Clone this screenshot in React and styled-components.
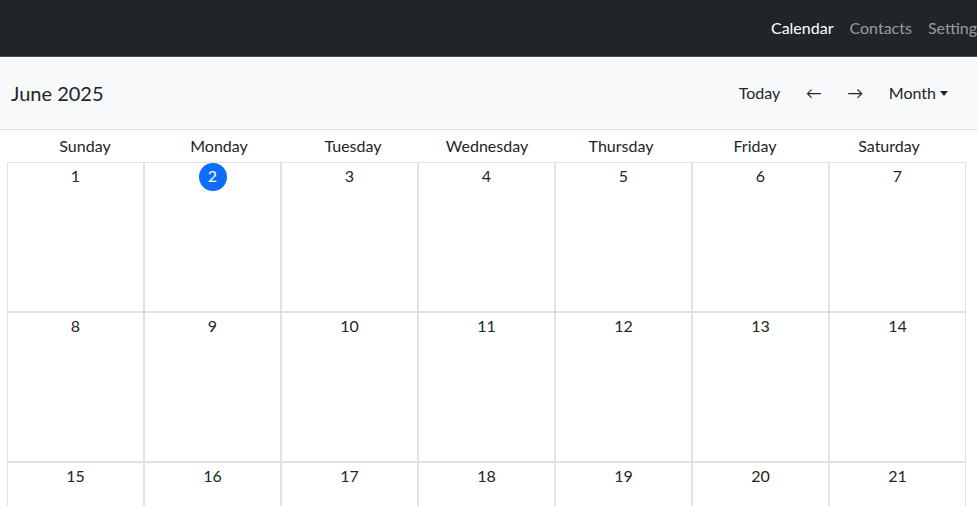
import React from "react";
import styled, { createGlobalStyle } from "styled-components";

const Global = createGlobalStyle`
  html, body { margin: 0; padding: 0; }
  body {
    font-family: "Segoe UI", Lato, "Liberation Sans", sans-serif;
    font-size: 16px;
    color: #212529;
    background: #fff;
    overflow-x: hidden;
  }
  * { box-sizing: border-box; }
`;

const Navbar = styled.nav`
  height: 57px;
  background: #212529;
  border-bottom: 1px solid #495057;
  display: flex;
  align-items: center;
  justify-content: flex-end;
`;

const NavList = styled.div`
  display: flex;
  flex-shrink: 0;
  margin-right: -15px;
`;

const NavLink = styled.a`
  padding: 8px 8px;
  color: ${(p) => (p.$active ? "#fff" : "rgba(255,255,255,0.55)")};
  text-decoration: none;
  line-height: 24px;
  white-space: nowrap;
`;

const Toolbar = styled.div`
  height: 73px;
  background: #f8f9fa;
  border-bottom: 1px solid #dee2e6;
  display: flex;
  align-items: center;
  justify-content: space-between;
  padding: 0 17px 0 11px;
`;

const Title = styled.h1`
  margin: 0;
  font-size: 20px;
  font-weight: 400;
  line-height: 28px;
`;

const Controls = styled.div`
  display: flex;
  align-items: center;
  gap: 1.5px;
`;

const Btn = styled.button`
  border: none;
  background: transparent;
  font: inherit;
  color: #212529;
  padding: 6px 12px;
  line-height: 24px;
  cursor: pointer;
  display: inline-flex;
  align-items: center;
`;

const Caret = styled.span`
  display: inline-block;
  margin-left: 4px;
  border-top: 5px solid #212529;
  border-left: 4px solid transparent;
  border-right: 4px solid transparent;
  margin-top: 1px;
`;

const Weekdays = styled.div`
  display: grid;
  grid-template-columns: repeat(7, 134px);
  padding-left: 18px;
  height: 32px;
  align-items: center;
`;

const Weekday = styled.div`
  text-align: center;
  line-height: 24px;
`;

const Grid = styled.div`
  display: grid;
  grid-template-columns: repeat(7, 137px);
  grid-auto-rows: 150px;
  margin-left: 7px;
`;

const Cell = styled.div`
  border: 1px solid #dee2e6;
  display: flex;
  flex-direction: column;
  align-items: center;
`;

const DayNum = styled.span`
  width: 28px;
  height: 28px;
  border-radius: 50%;
  display: flex;
  align-items: center;
  justify-content: center;
  line-height: 24px;
  padding-bottom: 2px;
  background: ${(p) => (p.$today ? "#0d6efd" : "transparent")};
  color: ${(p) => (p.$today ? "#fff" : "#212529")};
`;

const days = ["Sunday", "Monday", "Tuesday", "Wednesday", "Thursday", "Friday", "Saturday"];

export default function App() {
  const cells = [];
  for (let d = 1; d <= 28; d++) cells.push(d);
  return (
    <>
      <Global />
      <Navbar>
        <NavList>
          <NavLink $active href="#">Calendar</NavLink>
          <NavLink href="#">Contacts</NavLink>
          <NavLink href="#">Settings</NavLink>
        </NavList>
      </Navbar>
      <Toolbar>
        <Title>June 2025</Title>
        <Controls>
          <Btn>Today</Btn>
          <Btn>←</Btn>
          <Btn>→</Btn>
          <Btn>Month<Caret /></Btn>
        </Controls>
      </Toolbar>
      <Weekdays>
        {days.map((d) => (
          <Weekday key={d}>{d}</Weekday>
        ))}
      </Weekdays>
      <Grid>
        {cells.map((d) => (
          <Cell key={d}>
            <DayNum $today={d === 2}>{d}</DayNum>
          </Cell>
        ))}
      </Grid>
    </>
  );
}
